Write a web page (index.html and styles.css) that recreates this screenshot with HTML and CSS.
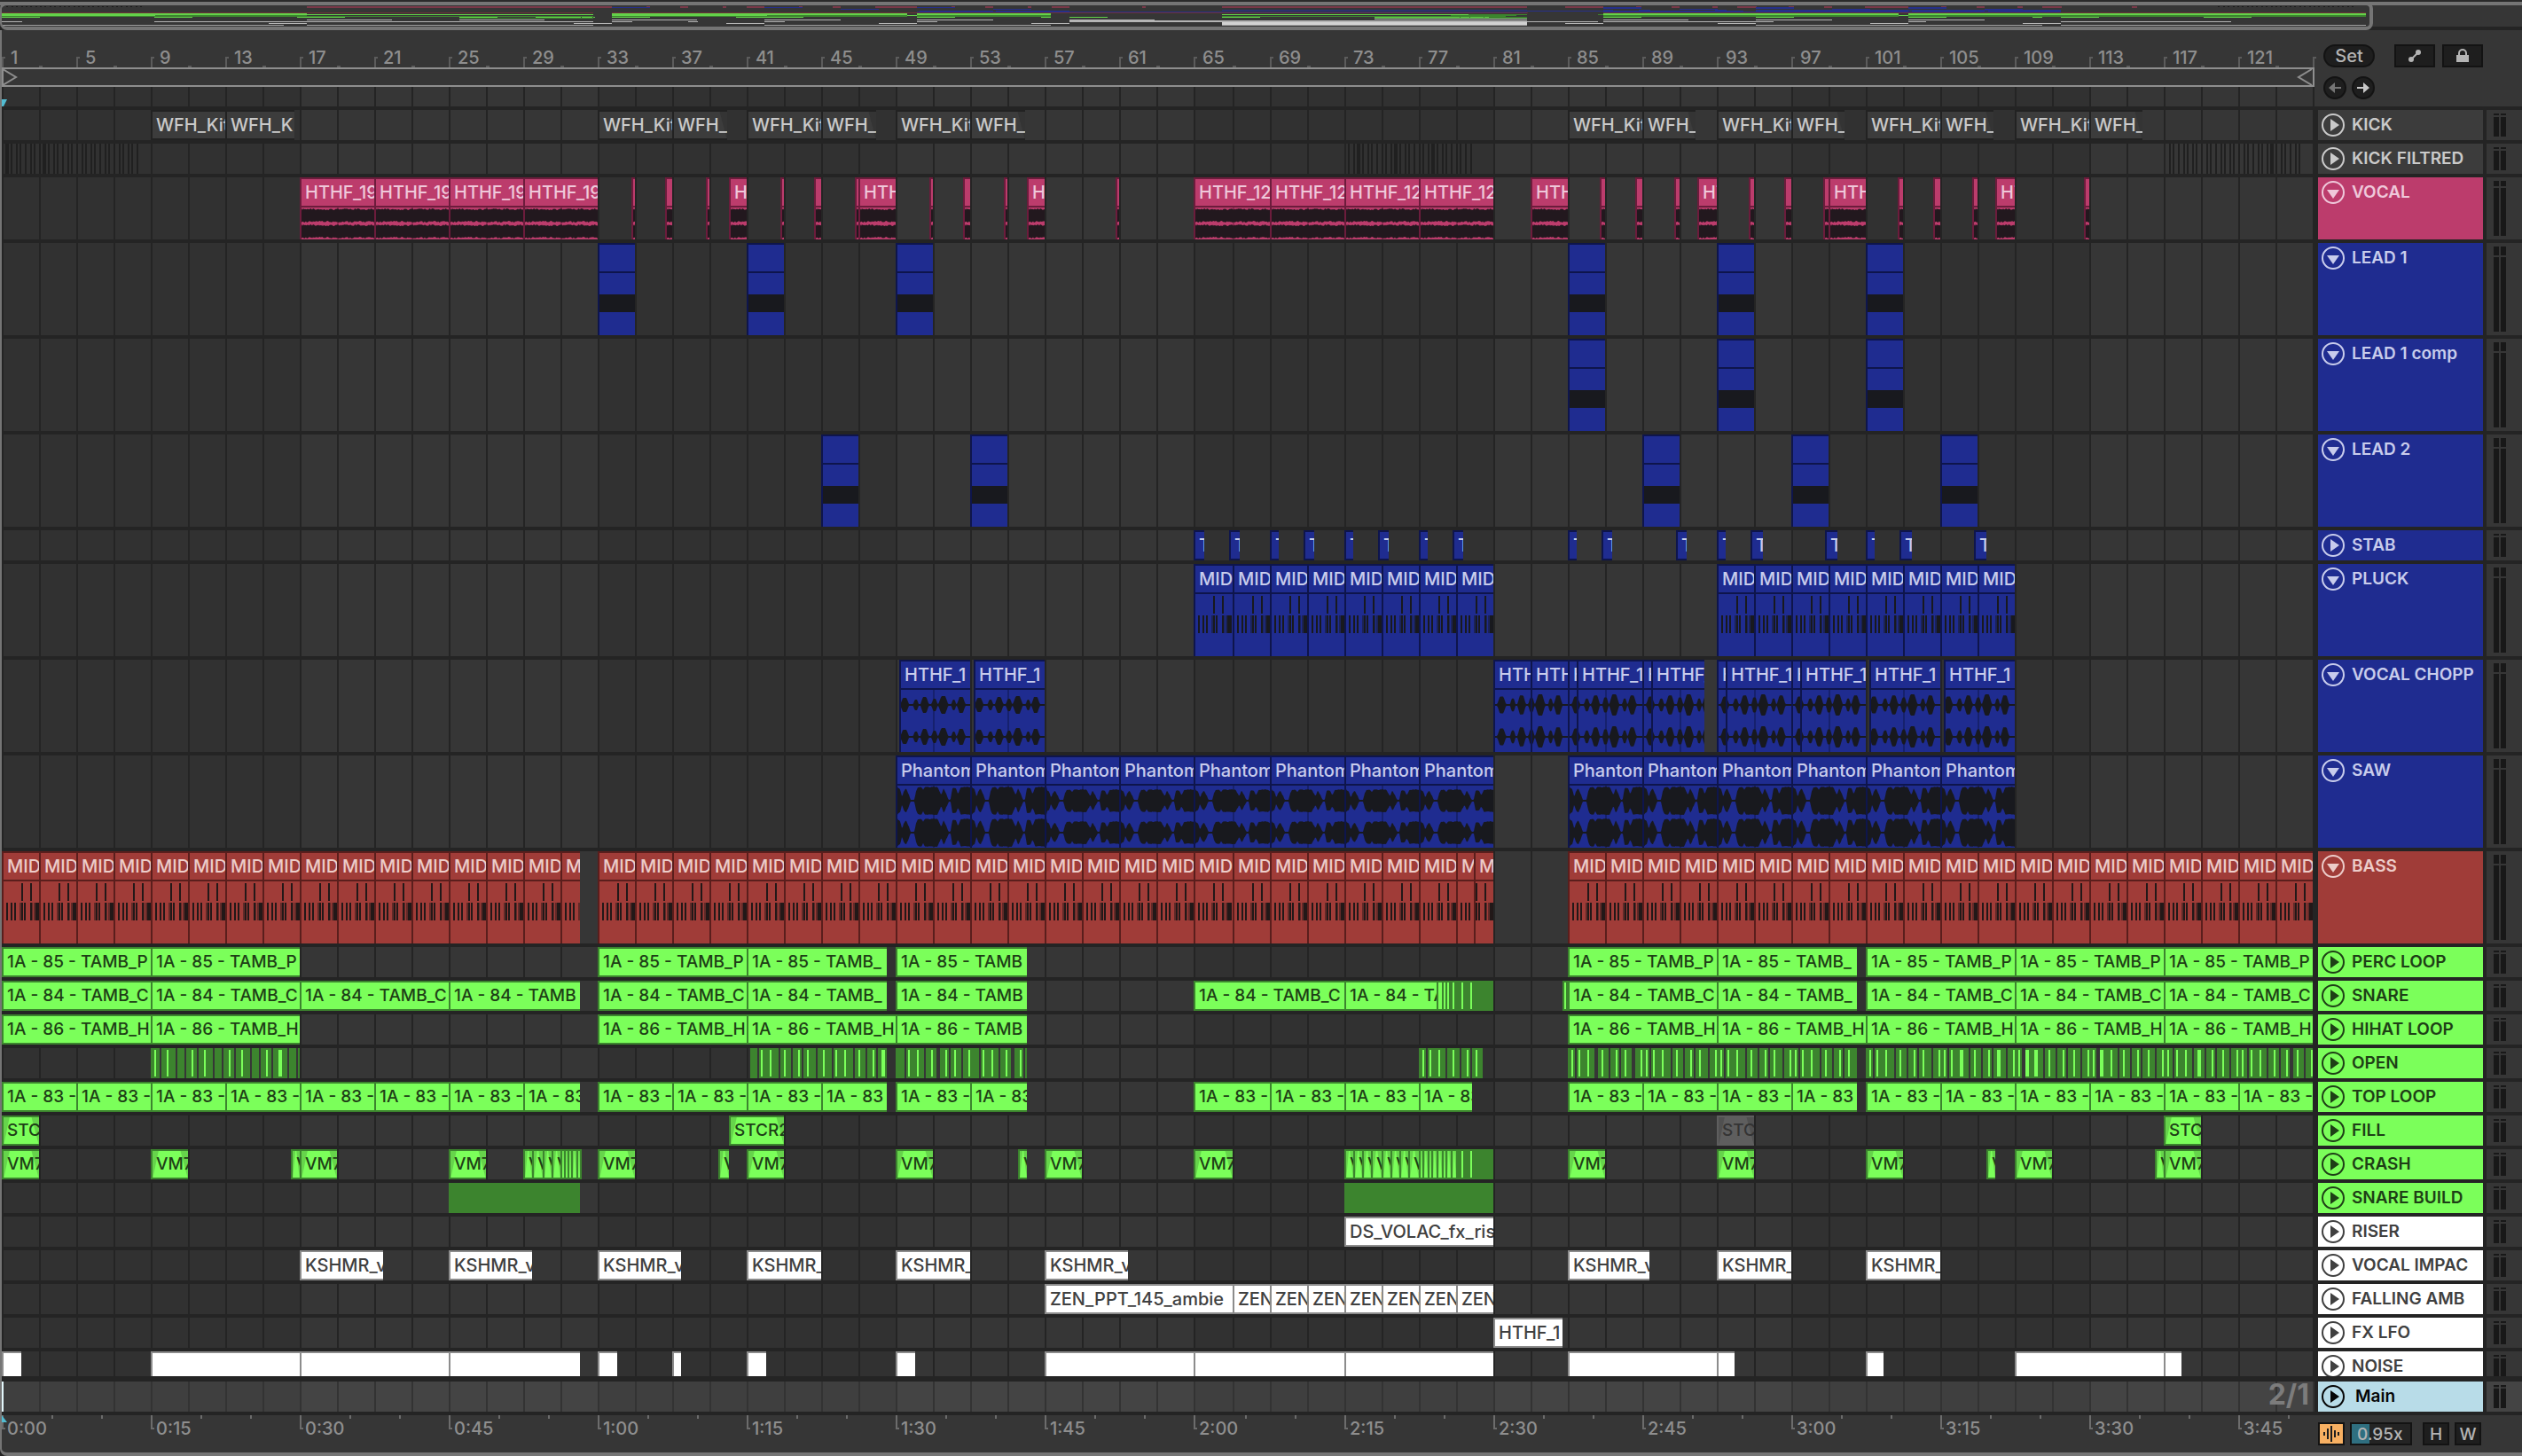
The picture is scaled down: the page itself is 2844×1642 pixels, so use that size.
FILE: index.html
```html
<!DOCTYPE html>
<html lang="en">
  <head>
    <meta charset="UTF-8" />
    <meta name="viewport" content="width=device-width, initial-scale=1.0" />
    <title>Arrangement</title>
    <link rel="stylesheet" href="styles.css" />
  </head>
  <body>
    <div class="overview">
      <svg class="overview-map"></svg>
      <div class="overview-window"></div>
    </div>

    <main class="arrangement">
      <section class="top">
        <div class="timeline">
          <div class="bar-ruler"></div>
          <div class="loop">
            <svg width="18" height="18" viewBox="0 0 18 18"><path d="M1 0 L16 9 L1 18 Z" /></svg>
            <svg width="18" height="18" viewBox="0 0 18 18"><path d="M17 0 L2 9 L17 18" /></svg>
          </div>
          <div class="scrub">
            <div class="grid"></div>
            <svg class="marker" width="6" height="8" viewBox="0 0 6 8"><path d="M0 0 H6 L2 8 H0 Z" /></svg>
          </div>
        </div>
        <div class="tools">
          <div class="tools-row">
            <button class="pill">Set</button>
            <button class="box" aria-label="Automation">
              <svg width="20" height="20" viewBox="0 0 20 20">
                <path d="M6 14 L14 6" stroke="#b4b4b4" stroke-width="2" />
                <circle cx="6" cy="14" r="3" fill="#b4b4b4" />
                <circle cx="14" cy="6" r="3" fill="#b4b4b4" />
              </svg>
            </button>
            <button class="box" aria-label="Lock">
              <svg width="20" height="20" viewBox="0 0 20 20">
                <path d="M6 9 V7 a4 4 0 0 1 8 0 V9" fill="none" stroke="#b4b4b4" stroke-width="2" />
                <rect x="3" y="9" width="14" height="8" fill="#b4b4b4" />
              </svg>
            </button>
          </div>
          <div class="tools-row">
            <button class="round off" aria-label="Previous">
              <svg width="18" height="16" viewBox="0 0 18 16"><path d="M2 8 L9 2 V7 H16 V9 H9 V14 Z" /></svg>
            </button>
            <button class="round" aria-label="Next">
              <svg width="18" height="16" viewBox="0 0 18 16"><path d="M16 8 L9 2 V7 H2 V9 H9 V14 Z" /></svg>
            </button>
          </div>
        </div>
      </section>

      <section class="tracks">
        <div class="grid"></div>
        <div class="rows"></div>
      </section>

      <section class="tracks main-track">
        <div class="grid"></div>
        <div class="track">
          <div class="lane"><i class="playhead"></i><span class="zoom-ratio">2/1</span></div>
          <div class="head main">
            <button class="fold" aria-label="Main">
              <svg viewBox="0 0 26 26"><circle cx="13" cy="13" r="12" /><path d="M10 6 L20 13 L10 20 Z" /></svg>
            </button>
            <span class="name">Main</span>
          </div>
          <div class="meter"><i></i><i></i></div>
        </div>
      </section>

      <footer class="bottom">
        <div class="time-ruler">
          <svg class="marker" width="6" height="8" viewBox="0 0 6 8"><path d="M0 0 L6 8 H0 Z" /></svg>
        </div>
        <div class="bottom-tools">
          <button class="box wave-btn" aria-label="Waveform">
            <svg width="22" height="22" viewBox="0 0 22 22">
              <path d="M3 9 V13 M7 5 V17 M11 2 V20 M15 7 V15 M19 9 V13" stroke="#1e1e1e" stroke-width="2" />
            </svg>
          </button>
          <input class="zoom" type="text" value="0.95x" aria-label="Zoom" />
          <button class="box small first">H</button>
          <button class="box small">W</button>
        </div>
      </footer>
    </main>

    <script src="script.js"></script>
  </body>
</html>
```

FILE: styles.css
```css
* {
  box-sizing: border-box;
}

body {
  margin: 0;
  background: #242424;
  font-family: Inter, "Liberation Sans", sans-serif;
  font-size: 19px;
  font-weight: 500;
  color: #8e8e8e;
  overflow: hidden;
}

button,
input {
  font: inherit;
  margin: 0;
  padding: 0;
}

i {
  display: block;
}

svg {
  display: block;
}

/* overview */
.overview {
  position: relative;
  height: 34px;
  padding: 6px 0 4px;
  background: linear-gradient(#2a2a2a 2px, #757575 2px, #757575 6px, #363636 6px, #363636 30px, #242424 30px);
}

.overview-map {
  width: 100%;
  height: 24px;
}

.overview-window {
  position: absolute;
  top: 2px;
  left: 0;
  width: 94.1%;
  height: 32px;
  border: 4px solid #757575;
  border-left-width: 2px;
  border-radius: 8px;
}

/* arrangement */
.arrangement {
  border-left: 2px solid #757575;
  border-bottom: 4px solid #757575;
  border-radius: 0 0 0 8px;
  background: #363636;
}

.top,
.track,
.bottom {
  display: flex;
  gap: 4px;
}

.top {
  border-bottom: 4px solid #242424;
}

.timeline,
.lane,
.time-ruler {
  flex: 1;
  min-width: 0;
  position: relative;
}

.bar-ruler {
  position: relative;
  height: 42px;
  font-size: 20px;
}

.bar-ruler .tick {
  position: absolute;
  bottom: 0;
  height: 12px;
  padding-left: 8px;
  border-left: 2px solid #5c5c5c;
  line-height: 2px;
}

.bar-ruler .tick::before {
  content: "";
  position: absolute;
  left: 0;
  top: 0;
  width: 2px;
  height: 2px;
  background: #5c5c5c;
}

.bar-ruler .tick.minor {
  height: 2px;
  padding: 0;
}

.loop {
  display: flex;
  justify-content: space-between;
  border: 2px solid #8e8e8e;
  border-left: 0;
}

.loop svg {
  fill: none;
  stroke: #8e8e8e;
  stroke-width: 2;
}

.scrub {
  position: relative;
  height: 22px;
}

.marker {
  position: absolute;
  left: 0;
  bottom: 0;
  fill: #52bcd2;
}

.time-ruler .marker {
  top: 0;
}

.grid {
  position: absolute;
  top: 0;
  left: 0;
  right: 234px;
  bottom: 0;
}

.scrub .grid {
  right: 0;
}

.grid i {
  position: absolute;
  top: 0;
  bottom: 0;
  width: 2px;
  background: #242424;
}

.grid .shade {
  background: #313131;
}

.tools {
  width: 230px;
  padding: 16px 44px 0 6px;
}

.tools-row {
  display: flex;
  align-items: center;
  gap: 6px;
}

.tools-row + .tools-row {
  margin-top: 10px;
}

.pill,
.box,
.round {
  display: flex;
  align-items: center;
  justify-content: center;
  width: 46px;
  height: 26px;
  border: 2px solid #131313;
  background: #1e1e1e;
  color: #b4b4b4;
}

.pill {
  width: 58px;
  border-radius: 13px;
  margin-right: auto;
  font-size: 20px;
}

.tools-row .box + .box {
  margin-left: 2px;
}

.round {
  width: 26px;
  border-radius: 50%;
  fill: #c8c8c8;
}

.round.off {
  fill: #757575;
}

/* tracks */
.tracks {
  position: relative;
}

.track {
  position: relative;
  height: 38px;
  border-bottom: 4px solid #242424;
  overflow: hidden;
}

.track.mid {
  height: 74px;
}

.track.tall {
  height: 108px;
}

.track.last {
  height: 34px;
  border-bottom-width: 6px;
}

.lane {
  overflow: hidden;
}

.head {
  position: relative;
  display: flex;
  gap: 8px;
  width: 186px;
  padding-left: 4px;
  overflow: hidden;
  background: var(--clip);
  color: var(--text);
  font-weight: 600;
  line-height: 34px;
  white-space: nowrap;
  box-shadow: 0 0 0 4px #242424;
}

.fold {
  flex: none;
  width: 26px;
  height: 26px;
  margin-top: 4px;
  border: 0;
  background: none;
  color: inherit;
}

.fold circle {
  fill: none;
  stroke: currentColor;
  stroke-width: 2;
}

.fold path {
  fill: currentColor;
}

.meter {
  display: flex;
  gap: 2px;
  width: 40px;
  padding: 4px 8px;
  background: #363636;
}

.meter i {
  width: 6px;
  background: linear-gradient(#181818 2px, #363636 2px, #363636 4px, #181818 4px);
}

.mid .meter i {
  background: linear-gradient(#181818 6px, #363636 6px, #363636 8px, #181818 8px);
}

.tall .meter i {
  background: linear-gradient(#181818 10px, #363636 10px, #363636 12px, #181818 12px);
}

.last .meter {
  padding-bottom: 0;
}

.main-track .lane,
.main-track .meter {
  background: rgba(255, 255, 255, 0.07);
}

.main {
  background: #b8dce8;
  color: #060606;
  gap: 12px;
}

.playhead {
  position: absolute;
  left: 0;
  width: 2px;
  height: 34px;
  background: #e4f8fc;
}

.zoom-ratio {
  position: absolute;
  right: 6px;
  top: 0;
  font-size: 32px;
  font-weight: 700;
  line-height: 30px;
  color: #7c7c7c;
}

/* clips */
.clip {
  position: absolute;
  top: 0;
  bottom: 0;
  overflow: hidden;
  border-left: 2px solid var(--edge);
  background: var(--clip);
  color: var(--text);
  font-size: 20px;
  white-space: nowrap;
}

.green .clip {
  font-size: 19px;
}

.clip .title {
  position: relative;
  display: block;
  height: 34px;
  padding-left: 4px;
  border-top: 2px solid var(--edge);
  border-bottom: 2px solid var(--edge);
  line-height: 30px;
}

.clip svg {
  position: absolute;
  top: 0;
  left: 0;
}

.clip.solid {
  background: var(--edge);
}

.clip.stripe,
.clip.gap,
.clip.lit {
  border: 0;
}

.clip.stripe {
  background: #202020;
}

.clip.gap {
  background: #363636;
}

.clip.lit {
  top: 2px;
  bottom: 2px;
}

.clip.muted {
  --clip: #5e5e5e;
  --edge: #5e5e5e;
  --text: #343434;
  --fade: #505050;
}

.gray {
  --clip: #3c3c3c;
  --edge: #222222;
  --text: #cacaca;
  --fade: #343434;
}

.pink {
  --clip: #bc3c6c;
  --edge: #6c1c3c;
  --text: #efc8da;
  --wave: #22181e;
}

.blue {
  --clip: #1f2c90;
  --edge: #0e154c;
  --text: #c8ccec;
  --wave: #18191e;
}

.red {
  --clip: #a03c38;
  --edge: #5a1e1c;
  --text: #ecccc9;
  --wave: #221818;
}

.green {
  --clip: #7bff5a;
  --edge: #3c842e;
  --text: #1e3f16;
  --fade: #66d44b;
}

.white {
  --clip: #ffffff;
  --edge: #8c8c8c;
  --text: #404040;
}

/* time ruler and bottom tools */
.time-ruler {
  height: 42px;
}

.time-ruler .tick {
  position: absolute;
  top: 0;
  height: 16px;
  padding-left: 4px;
  border-left: 2px solid #6c6c6c;
  font-size: 20px;
  line-height: 30px;
}

.time-ruler .tick::before {
  content: "";
  position: absolute;
  left: 0;
  bottom: 0;
  width: 2px;
  height: 2px;
  background: #6c6c6c;
}

.time-ruler .tick.minor {
  height: 4px;
}

.time-ruler .tick.minor::before {
  display: none;
}

.bottom-tools {
  display: flex;
  gap: 6px;
  width: 230px;
  padding-top: 8px;
}

.box.wave-btn {
  width: 30px;
  background: #f8b062;
}

.zoom {
  width: 70px;
  height: 26px;
  padding-left: 6px;
  border: 2px solid #131313;
  background: linear-gradient(90deg, #2f6f80 20px, #242424 20px);
  color: #b4b4b4;
}

.box.small {
  width: 30px;
}

.box.first {
  margin-left: 6px;
}
```

FILE: script.js
```js
const BARS = 124;

// consecutive clips that share one label
const run = (label, ...edges) =>
  edges.slice(1).map((end, i) => [edges[i], end, label]);

const every = (from, to, step, label) => {
  const list = [];
  for (let b = from; b < to; b += step) list.push([b, Math.min(b + step, to), label]);
  return list;
};

const each = (starts, length, label, kind) =>
  starts.map((s) => [s, s + length, label, kind]);

const until = (ends, length, label) => ends.map((e) => [e - length, e, label]);

const stripes = (from, to) => every(from, to, 0.25).map(([s]) => [s, s + 0.1, "", "stripe"]);

// hi-hat hits: a dark bed with gaps and bright hits, positions in bars
const hits = (from, to, period, gaps, lit) => {
  const list = [[from, to, "", "solid"]];
  for (let b = from; b < to; b += period) {
    gaps.forEach((g) => b + g < to && list.push([b + g, b + g + 0.1, "", "gap"]));
    lit.forEach((g) => b + g < to && list.push([b + g, b + g + 0.1, "", "lit"]));
  }
  return list;
};
const GAPS = [0.43, 1.5, 2.2, 2.8, 3.5];
const LIT = [0.18, 0.62, 1.1, 1.85, 2.6, 3.1, 3.9];

const fine = (list) => [[77.95, 81, "", "solid"], ...list.map((b) => [b, b + 0.1, "", "lit"])];

const tracks = [
  { name: "KICK", color: "gray", y: 0, clips: [
    [9, 13, "WFH_Kit"], [13, 16.7, "WFH_K"],
    ...[33, 41, 49, 85, 93, 101, 109].flatMap((b) => [[b, b + 4, "WFH_Kit"], [b + 4, b + 6.9, "WFH_", "fadeout"]]),
  ] },
  { name: "KICK FILTRED", color: "gray", y: 1, clips: [
    ...stripes(1.25, 8.4), ...stripes(73.25, 80), ...stripes(117.25, 124.4),
  ] },
  { name: "VOCAL", color: "pink", size: "mid", y: 1, h: 2, wave: "vocal", clips: [
    ...every(17, 33, 4, "HTHF_19"),
    ...until([35, 39, 43, 47, 51, 55, 61], 0.2), ...until([37, 45, 53], 0.4),
    [40.05, 41, "H"], [47, 49, "HTHF"], [56.05, 57, "H"],
    ...every(65, 81, 4, "HTHF_12"), [83, 85, "HTHF"],
    ...until([87, 91, 95, 99, 103, 107, 113], 0.27), ...until([89, 97, 105], 0.4),
    [92, 93, "HT"], [99, 101, "HTHF"], [108, 109, "HT"],
  ] },
  { name: "LEAD 1", color: "blue", size: "tall", y: 2, wave: "block", clips: each([33, 41, 49, 85, 93, 101], 2) },
  { name: "LEAD 1 comp", color: "blue", size: "tall", y: 3, wave: "block", clips: each([85, 93, 101], 2) },
  { name: "LEAD 2", color: "blue", size: "tall", y: 4, wave: "block", clips: each([45, 53, 89, 97, 105], 2) },
  { name: "STAB", color: "blue", y: 5, clips: [
    ...each([65, 69, 73, 77, 85, 93, 101], 0.5, "T"),
    ...each([66.85, 70.85, 74.85, 78.85, 86.85, 90.85, 94.85, 98.85, 102.85, 106.85], 0.6, "T"),
  ] },
  { name: "PLUCK", color: "blue", size: "tall", y: 5, wave: "midi", clips: [
    ...every(65, 81, 2, "MIDI"), ...every(93, 109, 2, "MIDI"),
  ] },
  { name: "VOCAL CHOPP", color: "blue", size: "tall", y: 6, wave: "chop", clips: [
    [49.15, 53, "HTHF_1"], [53.15, 57, "HTHF_1"],
    ...run("HTHF_12", 81, 83, 85, 85.5, 89, 89.5, 92.35),
    ...run("HTHF_12", 93, 93.5, 97, 97.5, 101),
    [101.2, 105, "HTHF_1"], [105.2, 109, "HTHF_1"],
  ] },
  { name: "SAW", color: "blue", size: "tall", y: 7, wave: "saw", clips: [
    ...every(49, 81, 4, "Phantom"), ...every(85, 109, 4, "Phantom"),
  ] },
  { name: "BASS", color: "red", size: "tall", y: 8, wave: "midi", clips: [
    ...every(1, 32, 2, "MIDI"), ...every(33, 79, 2, "MIDI"), [79, 80, "MIDI"], [80, 81, "MIDI"],
    ...every(85, 125, 2, "MIDI"),
  ] },
  { name: "PERC LOOP", color: "green", y: 9, clips: [
    ...run("1A - 85 - TAMB_P", 1, 9, 17), [33, 41, "1A - 85 - TAMB_P"], [41, 48.5, "1A - 85 - TAMB_"], [49, 56, "1A - 85 - TAMB"],
    [85, 93, "1A - 85 - TAMB_P"], [93, 100.5, "1A - 85 - TAMB_"], ...every(101, 125, 8, "1A - 85 - TAMB_P"),
  ] },
  { name: "SNARE", color: "green", y: 10, clips: [
    ...run("1A - 84 - TAMB_C", 1, 9, 17, 25), [25, 32, "1A - 84 - TAMB"],
    [33, 41, "1A - 84 - TAMB_C"], [41, 48.5, "1A - 84 - TAMB_"], [49, 56, "1A - 84 - TAMB"],
    ...run("1A - 84 - TAMB_C", 65, 73, 77.95),
    ...fine([78.05, 78.2, 78.4, 78.6, 78.85, 79.3, 79.8]),
    [84.7, 85, "", "solid"], [84.85, 84.95, "", "lit"],
    [85, 93, "1A - 84 - TAMB_C"], [93, 100.5, "1A - 84 - TAMB_"], ...every(101, 125, 8, "1A - 84 - TAMB_C"),
  ] },
  { name: "HIHAT LOOP", color: "green", y: 11, clips: [
    ...run("1A - 86 - TAMB_H", 1, 9, 17), ...run("1A - 86 - TAMB_H", 33, 41, 49), [49, 56, "1A - 86 - TAMB"],
    ...every(85, 125, 8, "1A - 86 - TAMB_H"),
  ] },
  { name: "OPEN", color: "green", y: 11, clips: [
    ...hits(9.05, 17, 2, [0.45, 1.25, 1.75], [0.1, 0.85]),
    ...hits(41.15, 48.5, 4, GAPS, LIT.slice(1)), ...hits(49, 56, 4, GAPS, LIT.slice(1)),
    ...hits(77, 80.45, 4, GAPS, LIT), ...hits(85, 100.5, 4, GAPS, LIT), ...hits(101, 125, 4, GAPS, LIT),
  ] },
  { name: "TOP LOOP", color: "green", y: 12, dim: true, clips: [
    ...every(1, 32, 4, "1A - 83 - T"), ...every(33, 48.5, 4, "1A - 83 - T"), ...every(49, 56, 4, "1A - 83 - T"),
    ...every(65, 79.9, 4, "1A - 83 - T"), ...every(85, 100.5, 4, "1A - 83 - T"), ...every(101, 125, 4, "1A - 83 - T"),
  ] },
  { name: "FILL", color: "green", y: 13, clips: [
    [1, 3, "STCR2", "fade"], [40, 43, "STCR2", "fade"], [93, 95, "STCR2", "fade muted"], [117, 119, "STCR2", "fade"],
  ] },
  { name: "CRASH", color: "green", y: 13, clips: [
    ...each([1, 9, 17, 25, 33, 41, 49, 57, 65, 85, 93, 101, 109, 117], 2, "VM7", "fade"),
    ...until([17, 40, 56, 108, 117], 0.5, "V").map((c) => [...c, "fade"]),
    ...every(29, 31, 0.5, "V").map((c) => [...c, "fade"]), ...every(31, 32, 0.2).map((c) => [...c, "fade"]),
    [73, 81, "", "solid"],
    ...every(73, 77, 0.5, "V").map((c) => [...c, "fade"]), ...every(77, 79, 0.25).map((c) => [...c, "fade"]),
    [79.3, 79.4, "", "lit"], [79.8, 79.9, "", "lit"],
  ] },
  { name: "SNARE BUILD", color: "green", y: 14, clips: [[25, 32, "", "solid"], [73, 81, "", "solid"]] },
  { name: "RISER", color: "white", y: 15, clips: [[73, 81, "DS_VOLAC_fx_ris"]] },
  { name: "VOCAL IMPAC", color: "white", y: 16, clips: [
    ...each([17, 25, 33, 57, 85], 4.45, "KSHMR_v"), ...each([41, 49, 93, 101], 4, "KSHMR_"),
  ] },
  { name: "FALLING AMB", color: "white", y: 17, clips: [[57, 67, "ZEN_PPT_145_ambie"], ...every(67, 81, 2, "ZEN")] },
  { name: "FX LFO", color: "white", y: 18, clips: [[81, 84.7, "HTHF_1"]] },
  { name: "NOISE", color: "white", size: "last", y: 18, clips: [
    ...each([1, 33, 41, 49], 1.05), ...run("", 9, 17, 25, 32), [37, 37.5], ...run("", 57, 65, 73, 81),
    ...run("", 85, 93, 93.95), [101, 101.95], ...run("", 109, 117, 117.95),
  ] },
];

// all edges sit on a 2px raster
const snap = (v) => Math.round(v / 2) * 2;
let unit = 21;
const barX = (bar) => snap((bar - 1) * unit - 0.3);

const jitter = (n) => Math.abs(Math.sin(n * 12.9898) * 43758.5453) % 1;

// [position in bars, amplitude] over four bars
const SAW = [[0, 1], [0.15, 0.8], [0.25, 0.3], [0.35, 0.7], [0.45, 0.9], [0.6, 0.5], [0.7, 0.08], [0.9, 0.08],
  [1, 0.7], [1.1, 1], [1.3, 1], [1.38, 0.8], [1.45, 1], [2.15, 1], [2.25, 0.7], [2.35, 0.4], [2.48, 0.9],
  [2.62, 0.5], [2.75, 0.08], [2.85, 0.1], [2.95, 0.9], [3.15, 0.9], [3.25, 0.5], [3.4, 1], [3.9, 1], [4, 0.9]];
const BLOBS = [[0.35, 0.25, 8], [0.95, 0.16, 6], [1.42, 0.24, 9], [1.95, 0.18, 7], [2.42, 0.28, 10], [2.98, 0.14, 6], [3.38, 0.24, 9]];

function amplitude(kind, bar, i) {
  if (kind === "vocal") return 8 - jitter(i) * 2;
  const p = (bar - 1) % 4;
  if (kind === "chop") {
    const scale = bar > 80 ? 1.2 : 1;
    return BLOBS.reduce((a, [c, w, h]) => Math.max(a, Math.min(1, 1.6 * (1 - Math.abs(p - c) / w)) * h * scale), 1);
  }
  const n = SAW.findIndex((s) => s[0] > p);
  const [x0, a0] = SAW[n - 1];
  const [x1, a1] = SAW[n];
  const full = bar > 57 && bar < 81 ? 13 : 16;
  return Math.max(1, (a0 + ((a1 - a0) * (p - x0)) / (x1 - x0)) * full - jitter(i));
}

function body(kind, start, end, width) {
  if (kind === "block") return `<rect y="58" width="${width}" height="20" fill="var(--wave)" />`;

  if (kind === "midi") {
    const notes = [[20, 36, 2], [30, 36, 2], [3, 58, 2], [8, 58, 2], [12, 58, 2], [20, 58, 2], [23, 58, 2], [30, 58, 2], [36, 58, 5]];
    const ghost = [[18, 58, 2], [32, 58, 1], [34, 58, 2]];
    const shift = start === 80 ? -20 : 0;
    const rect = (o) => ([x, y, w]) => `<rect x="${x + shift}" y="${y}" width="${w}" height="20" fill="var(--wave)" opacity="${o}" />`;
    return notes.map(rect(1)).join("") + ghost.map(rect(0.5)).join("");
  }

  const mids = kind === "vocal" ? [43, 61] : [51, 87];
  let out = "";
  for (let b = 1 + 2 * Math.ceil((start - 0.9) / 2); b < end; b += 2) {
    out += `<rect x="${barX(b) - barX(start) - 2}" y="34" width="2" height="80" fill="var(--edge)" opacity="0.5" />`;
  }
  mids.forEach((mid) => {
    let up = "";
    let down = "";
    for (let x = 0; x <= width; x++) {
      const a = amplitude(kind, start + x / unit, x);
      up += `L${x} ${(mid - a).toFixed(1)}`;
      down = `L${x} ${(mid + amplitude(kind, start + x / unit, x + 7)).toFixed(1)}` + down;
    }
    out += `<path d="M0 ${mid}${up}${down}Z" fill="var(--wave)" />`;
  });
  return out;
}

function clip(track, [start, end, label = "", kind = ""]) {
  const left = barX(start);
  const width = Math.max(2, barX(end) - left);
  const inner = width - 2;
  const plain = /solid|stripe|gap|lit/.test(kind);
  let svg = "";
  if (track.wave) svg = body(track.wave, start, end, inner);
  if (kind.startsWith("fade")) {
    const t = Math.min(9, inner / 2);
    svg += `<path d="M${inner - t} 0 H${inner} V34 Z" fill="var(--fade)" />`;
    if (kind !== "fadeout") svg += `<path d="M0 0 H${t * 0.8} L0 34 Z" fill="var(--fade)" />`;
  }
  if (svg) svg = `<svg width="${inner}" height="104">${svg}</svg>`;
  return `<div class="clip ${kind}" style="left:${left}px;width:${width}px">${svg}${plain ? "" : `<span class="title">${label}</span>`}</div>`;
}

function renderTracks() {
  document.querySelector(".rows").innerHTML = tracks
    .map((t) => {
      const open = t.size === "mid" || t.size === "tall";
      const arrow = open ? "M6 10 H20 L13 20 Z" : "M10 6 L20 13 L10 20 Z";
      return `
      <div class="track ${t.color} ${t.size || ""}">
        <div class="lane">${t.clips.map((c) => clip(t, c)).join("")}</div>
        <div class="head">
          <button class="fold" aria-label="${t.name}">
            <svg viewBox="0 0 26 26"><circle cx="13" cy="13" r="12" /><path d="${arrow}" /></svg>
          </button>
          <span class="name">${t.name}</span>
        </div>
        <div class="meter"><i></i><i></i></div>
      </div>`;
    })
    .join("");
}

function renderGrid() {
  let html = "";
  for (let b = 1; b < BARS; b += 32) {
    const end = Math.min(b + 16, BARS + 1);
    html += `<i class="shade" style="left:${barX(b)}px;width:${barX(end) - barX(b)}px"></i>`;
  }
  for (let b = 1; b <= BARS + 1; b += 2) html += `<i style="left:${barX(b)}px"></i>`;
  document.querySelectorAll(".grid").forEach((g) => (g.innerHTML = html));
}

function renderRulers() {
  let bars = "";
  for (let b = 1; b <= BARS + 1; b += 2) {
    const major = b % 4 === 1;
    bars += `<span class="tick ${major ? "" : "minor"}" style="left:${barX(b)}px">${major && b <= BARS ? b : ""}</span>`;
  }
  document.querySelector(".bar-ruler").innerHTML = bars;

  // 128 bpm: eight bars are fifteen seconds
  let times = "";
  for (let s = 0; s <= 230; s += 5) {
    const major = s % 15 === 0;
    const text = `${Math.floor(s / 60)}:${String(s % 60).padStart(2, "0")}`;
    times += `<span class="tick ${major ? "" : "minor"}" style="left:${barX(1 + (s * 8) / 15)}px">${major ? text : ""}</span>`;
  }
  document.querySelector(".time-ruler").insertAdjacentHTML("afterbegin", times);
}

function renderOverview() {
  const map = document.querySelector(".overview-map");
  const u = map.clientWidth * 0.00756;
  const colors = { gray: "#1c1c1c", pink: "#7a3848", blue: "#26308a", red: "#6e3236", green: "#63d24a", white: "#b4b4b4" };
  const line = (s, e, y, h, fill) =>
    `<rect x="${2 + Math.round((s - 1) * u)}" y="${y}" width="${Math.max(2, Math.round((e - s) * u))}" height="${h}" fill="${fill}" />`;
  let out = "";
  tracks.forEach((t) => {
    t.clips.forEach(([s, e, , kind = ""]) => {
      if (t.name === "KICK" || /gap|lit/.test(kind)) return;
      const fill = t.dim || kind === "solid" ? "#3c842e" : colors[t.color];
      out += line(s, e, t.y, t.h || 1, fill);
    });
  });
  [[1, 15.8], [17, 32], [41, 56], [65, 81], [93, 108], [109, 125]].forEach(([s, e]) => (out += line(s, e, 22, 1, "#a0a0a0")));
  [[15, 17], [31, 33], [39, 41], [47, 49], [55, 57], [83, 85], [91, 93], [99, 101], [107, 109]].forEach(
    ([s, e]) => (out += line(s, e, 20, 1, "#b4b4b4"))
  );
  out += line(65, 81, 19, 3, "#d2d2d2");
  map.innerHTML = out;
}

function render() {
  unit = (document.querySelector(".timeline").clientWidth - 1.5) / BARS;
  document.querySelectorAll(".time-ruler .tick").forEach((t) => t.remove());
  renderGrid();
  renderTracks();
  renderRulers();
  renderOverview();
}

window.addEventListener("resize", render);
render();
```
